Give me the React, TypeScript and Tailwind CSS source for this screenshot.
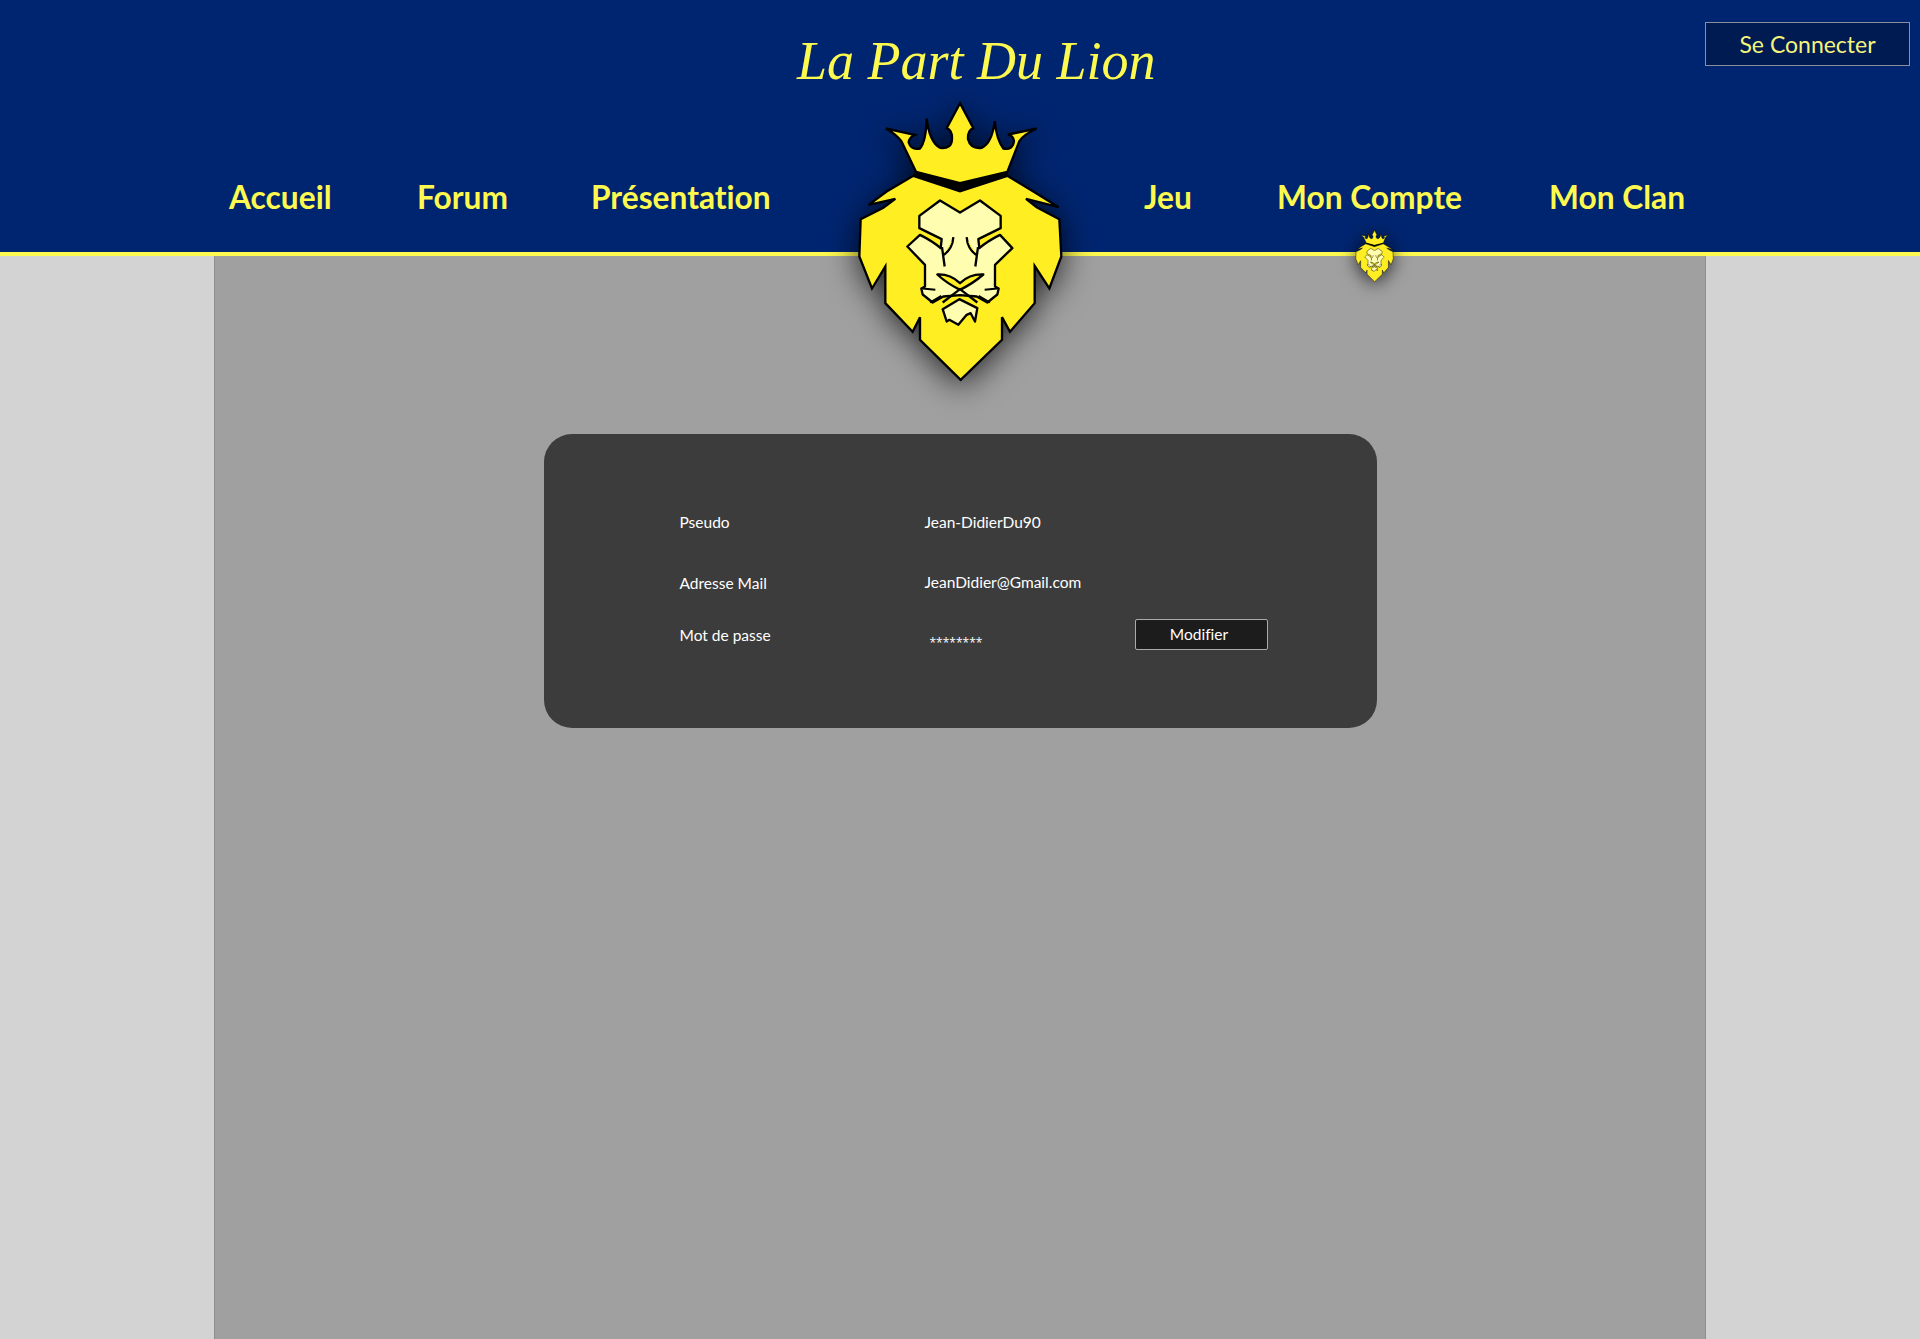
import React from 'react';

const navItems = ['Accueil', 'Forum', 'Présentation', 'Jeu', 'Mon Compte', 'Mon Clan'];

function LionLogo({ className }: { className: string }) {
  return (
    <svg viewBox="255 295 630 860" className={className} aria-hidden="true">
      {/* crown */}
      <path
        d="M570 310 L610 385 Q592 392 594 418 Q602 448 635 444 Q666 430 674 364 Q680 420 700 446 Q728 452 732 424 Q730 408 714 404 L800 386 Q760 405 748 424 L712 516 L570 550 L438 516 L394 424 Q380 405 348 386 L434 405 Q418 412 416 428 Q424 452 450 446 Q468 425 470 356 Q478 425 510 444 Q545 448 546 418 Q548 392 530 385 Z"
        fill="#ffee22"
        stroke="#000"
        strokeWidth="7"
      />
      <path d="M436 514 L570 550 L714 514 L714 528 L570 574 L428 528 Z" fill="#000" />
      {/* mane */}
      <path
        d="M430 528 L570 574 L712 528 L790 575 L866 622 L768 597 L800 622 L868 658 L874 770 L838 866 L794 798 L794 910 L720 996 L696 952 L696 1020 L572 1140 L450 1020 L450 952 L428 996 L346 910 L346 800 L306 866 L268 770 L272 658 L340 624 L376 597 L296 615 L350 575 Z"
        fill="#ffee22"
        stroke="#000"
        strokeWidth="7"
      />
      {/* face */}
      <path
        d="M510 602 L570 638 L630 602 L692 648 L692 685 L625 718 L628 745 Q650 725 690 705 L727 745 L675 795 L675 860 L686 866 L682 884 L652 908 L620 890 L570 886 L520 890 L488 908 L458 884 L454 866 L465 860 L465 795 L412 740 L450 705 Q490 725 512 745 L515 718 L448 685 L448 648 Z"
        fill="#fffdb0"
        stroke="#000"
        strokeWidth="7"
        strokeLinejoin="round"
      />
      {/* chin */}
      <path
        d="M568 898 L622 925 L615 965 L602 940 L590 945 L565 975 L538 960 L530 965 L518 928 Z"
        fill="#fffdb0"
        stroke="#000"
        strokeWidth="7"
        strokeLinejoin="round"
      />
      {/* eyes */}
      <path
        d="M516 742 L524 800 M624 742 L616 800 M550 712 Q548 745 522 765 M590 712 Q592 745 618 765"
        fill="none"
        stroke="#000"
        strokeWidth="7"
      />
      <path d="M544 726 Q538 745 524 758 M596 726 Q602 745 616 758" stroke="#ffee22" strokeWidth="3" fill="none" />
      {/* nose and muzzle */}
      <path
        d="M502 824 Q540 822 570 850 Q600 822 640 824 Q610 850 570 870 Q530 850 502 824 Z"
        fill="#ffee22"
        stroke="#000"
        strokeWidth="7"
        strokeLinejoin="round"
      />
      <path d="M518 908 L570 868 L622 908" fill="none" stroke="#000" strokeWidth="7" />
      <path d="M458 866 L496 870 M480 908 L514 888 M682 866 L644 870 M660 908 L626 888" stroke="#000" strokeWidth="6" fill="none" />
    </svg>
  );
}

export default function App() {
  return (
    <div className="relative min-h-[1339px] bg-[#d3d3d3] font-['Lato',sans-serif] [font-variant-ligatures:none]">
      <header className="h-[256px] border-b-4 border-[#fdf94f] bg-[#002570]">
        <div className="grid h-[129px] grid-cols-[797px_358px_1fr]">
          <div />
          <h1 className="mt-[26px] whitespace-nowrap font-['Liberation_Serif',serif] text-[54px] italic leading-[70px] text-[#fdf94f]">
            La Part Du Lion
          </h1>
          <div className="flex items-start justify-end pr-[10px] pt-[22px]">
            <button className="h-[44px] w-[205px] border border-[#8a8f9c] bg-[#001a52] text-[23px] font-normal text-[#f4f47c]">
              Se Connecter
            </button>
          </div>
        </div>
        <nav className="grid grid-cols-[188px_174px_553px_133px_272px_auto] pl-[229px] pt-[44px] text-[31.7px] font-bold leading-[48px] text-[#fdf94f]">
          {navItems.map((item) => (
            <a key={item} className="whitespace-nowrap">
              {item}
            </a>
          ))}
        </nav>
      </header>

      <LionLogo className="absolute left-[855px] top-[98px] h-[287px] w-[210px] drop-shadow-[0_6px_16px_rgba(0,0,0,0.75)]" />
      <LionLogo className="absolute left-[1355px] top-[229px] h-[54px] w-[39px] drop-shadow-[0_3px_9px_rgba(0,0,0,0.75)]" />

      <main className="mx-[214px] h-[1083px] border-x border-[#8f8f8f] bg-[#a0a0a0] pt-[178px]">
        <section className="mx-auto h-[294px] w-[833px] rounded-[28px] bg-[#3c3c3c] pl-[136px] pt-[77px] text-[15.5px] text-white">
          <div className="grid grid-cols-[245px_210px_auto]">
            <span className="leading-[22px]">Pseudo</span>
            <span className="leading-[22px]">Jean-DidierDu90</span>
            <span />
            <span className="mt-[39px] leading-[22px]">Adresse Mail</span>
            <span className="mt-[38px] leading-[22px]">JeanDidier@Gmail.com</span>
            <span />
            <span className="mt-[30px] leading-[22px]">Mot de passe</span>
            <span className="mt-[38px] pl-[5px] font-['Open_Sans',sans-serif] text-[12px] leading-[22px]">********</span>
            <button className="mt-[25px] h-[31px] w-[133px] rounded-[2px] border border-[#aaaaaa] bg-[#1c1c1c] pr-[4px] pt-[1px] text-white">
              Modifier
            </button>
          </div>
        </section>
      </main>
    </div>
  );
}
